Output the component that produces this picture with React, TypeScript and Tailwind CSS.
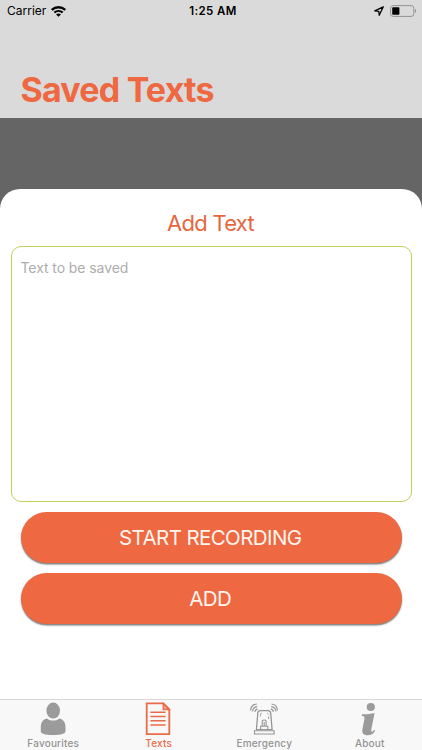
import type { ReactNode } from 'react';

function StatusBar() {
  return (
    <div className="grid h-[22px] grid-cols-3 items-center pl-[7px] pr-[5px] text-black">
      <div className="flex items-center gap-[5px]">
        <span className="text-[12px] leading-[22px]">Carrier</span>
        <svg width="15" height="11" viewBox="0 0 15 11" fill="none" stroke="#000">
          <path d="M.8 4C4.6.4 10.4.4 14.200 4" strokeWidth="2.4" />
          <path d="M3.300 6.600c2.400-2.200 6-2.200 8.400 0" strokeWidth="2.100" />
          <path d="M7.500 10.800 5 8.500c1.400-1.300 3.600-1.300 5 0z" fill="#000" stroke="none" />
        </svg>
      </div>
      <span className="pl-[2px] text-center text-[11.5px] font-semibold leading-[22px] tracking-[0.35px]">1:25 AM</span>
      <div className="flex items-center justify-end gap-[6px]">
        <svg width="10" height="10" viewBox="0 0 10 10" fill="none" stroke="#000" strokeWidth="1.3" strokeLinejoin="round">
          <path d="M9.300.8.8 4.900l4 .4.4 4z" />
        </svg>
        <svg width="27" height="12" viewBox="0 0 27 12">
          <rect x=".6" y=".6" width="23.2" height="10.8" rx="2.6" fill="none" stroke="#929292" />
          <rect x="2.2" y="2.2" width="7.2" height="7.6" rx=".8" fill="#000" />
          <path d="M25 4v4c1.6-.6 1.6-3.4 0-4z" fill="#929292" />
        </svg>
      </div>
    </div>
  );
}

function ActionButton({ children }: { children: ReactNode }) {
  return (
    <button className="h-[51px] w-full rounded-full bg-[#ee6841] pr-[1.5px] text-[20.5px] leading-[51px] tracking-[-0.6px] text-[#fff5ef] shadow-[0_1.5px_1.5px_rgba(0,0,0,0.5)]">
      {children}
    </button>
  );
}

function PersonIcon() {
  return (
    <svg width="26" height="34" viewBox="0 0 26 34" fill="#9b9b9b">
      <ellipse cx="13.2" cy="8.6" rx="6.8" ry="8" />
      <path d="M7 16.400c3.500 2.900 8.800 2.900 12.300 0 4.300.7 6.200 4.300 6.200 8.800v4.300c0 1.700-4.100 3.600-12.400 3.600S.8 31.200.8 29.500v-4.300c0-4.500 1.900-8.100 6.200-8.800z" />
    </svg>
  );
}

function DocumentIcon() {
  return (
    <svg width="26" height="34" viewBox="0 0 26 34" fill="none" stroke="#ea6b48" strokeWidth="1.8">
      <path d="M1.700 1.400h16.600l6 6v24.800H1.700z" />
      <path d="M18.200 1.400v6.100h6.100z" fill="#ea6b48" fillOpacity=".55" strokeWidth="1.300" />
      <path d="M5.400 10.300h15.200M5.400 14.600h15.200M5.400 18.800h15.200M5.400 23h15.200" strokeWidth="1.500" />
    </svg>
  );
}

function SirenIcon() {
  return (
    <svg width="28" height="34" viewBox="0 0 28 34" fill="none" stroke="#959595" strokeWidth="1.1">
      <path d="M6 27.500h16.500M4.500 28.800h19.600v3.200H4.500z" />
      <path d="M6.400 27.500 7.800 11.300c.1-1.800 1.100-2.700 2.900-2.700h7.100c1.800 0 2.800.9 2.900 2.700l1.400 16.200" strokeWidth="1.3" />
      <path d="M10.600 27.300v-3h7.200v3M12.200 24.300v-4.500c0-2.500 4-2.500 4 0v4.500M14.200 20v4.300" />
      <path d="M10.300 14.500l.2-2c.1-.9.500-1.300 1.400-1.300M17.300 11.400c.8.100 1 .4 1.100 1.200M18.500 14.500l.2 2.500" strokeWidth=".9" />
      <path d="M7.600 7.100c-1.700.2-2.500 1.200-2.600 2.800M7.200 4.600c-2.900.3-4.500 2.100-4.700 4.900M6.900 2C3.100 2.300.7 4.700.6 8.600M20.800 7.100c1.700.2 2.500 1.200 2.600 2.800M21.200 4.600c2.900.3 4.500 2.100 4.700 4.900M21.500 2c3.500.3 5.800 2.700 5.900 6.600" />
    </svg>
  );
}

function InfoIcon() {
  return (
    <svg width="18" height="34" viewBox="0 0 18 34" fill="#9b9b9b">
      <circle cx="10.8" cy="5" r="4.1" />
      <path d="M2 12.200c4 .2 8 -.2 12.600-1.300L11.400 26.800c-.4 2.100-.2 2.800.6 2.800.7 0 1.500-.7 2.200-1.900l1 .7c-1.700 3.300-4.200 4.900-7.500 4.900-4.300 0-6.100-2.200-5.300-6l2-10.200c.4-2-.1-2.900-2.700-3.300z" />
    </svg>
  );
}

const tabs = [
  { label: 'Favourites', icon: <PersonIcon />, color: 'text-[#949494]' },
  { label: 'Texts', icon: <DocumentIcon />, color: 'text-[#ea6b48]' },
  { label: 'Emergency', icon: <SirenIcon />, color: 'text-[#949494]' },
  { label: 'About', icon: <InfoIcon />, color: 'text-[#949494]' },
];

export default function App() {
  return (
    <div className="flex h-[750px] w-[422px] flex-col overflow-hidden bg-[#656565] font-['Inter','Liberation_Sans',sans-serif]">
      <header className="h-[118px] shrink-0 bg-[#dadada]">
        <StatusBar />
        <h1 className="mt-[46px] pl-[20.5px] text-[34px] font-bold leading-[44px] tracking-[-0.8px] text-[#ee6841]">Saved Texts</h1>
      </header>

      <main className="mt-[71px] flex flex-1 flex-col rounded-t-[20px] bg-white px-[10.5px]">
        <h2 className="mt-[20px] pr-[1px] text-center text-[22px] leading-[28px] tracking-[-0.75px] text-[#e5673f]">Add Text</h2>
        <textarea
          className="mt-[9px] block h-[256px] w-full resize-none rounded-[10px] border border-[#bfd45c] bg-white px-[9px] py-[11px] text-[14px] leading-[20px] tracking-[-0.08px] outline-none placeholder:text-[#adadad]"
          placeholder="Text to be saved"
        />
        <div className="mt-[10px] flex flex-col gap-[10px] px-[10px]">
          <ActionButton>START RECORDING</ActionButton>
          <ActionButton>ADD</ActionButton>
        </div>
      </main>

      <nav className="grid h-[51px] shrink-0 grid-cols-4 border-t border-[#d8d8d8] bg-[#f8f8f8]">
        {tabs.map((tab) => (
          <div key={tab.label} className={`flex flex-col items-center pt-[2px] ${tab.color}`}>
            {tab.icon}
            <span className="pl-[1px] text-[10px] font-medium leading-[14px] tracking-[0.2px]">{tab.label}</span>
          </div>
        ))}
      </nav>
    </div>
  );
}
